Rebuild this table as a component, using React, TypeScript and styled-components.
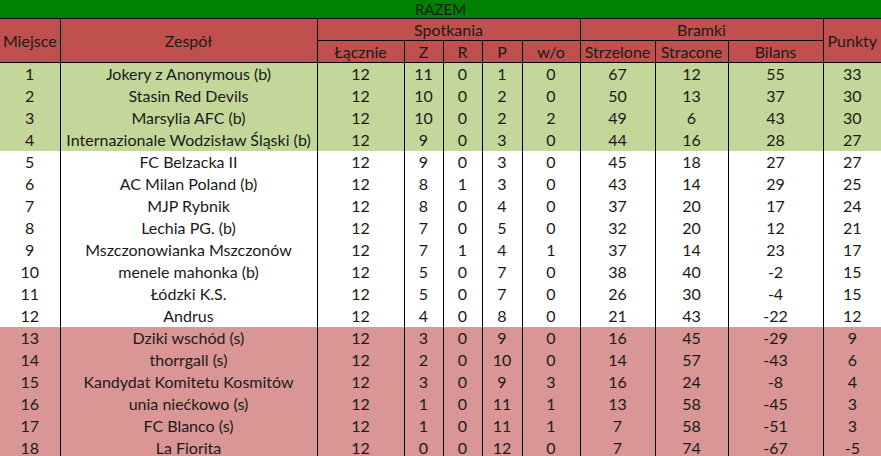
import styled, { createGlobalStyle } from 'styled-components';

type TZone = 'promo' | 'mid' | 'drop';

interface Team {
  name: string;
  played: number;
  w: number;
  d: number;
  l: number;
  wo: number;
  gf: number;
  ga: number;
  pts: number;
}

const teams: Team[] = [
  { name: 'Jokery z Anonymous (b)', played: 12, w: 11, d: 0, l: 1, wo: 0, gf: 67, ga: 12, pts: 33 },
  { name: 'Stasin Red Devils', played: 12, w: 10, d: 0, l: 2, wo: 0, gf: 50, ga: 13, pts: 30 },
  { name: 'Marsylia AFC (b)', played: 12, w: 10, d: 0, l: 2, wo: 2, gf: 49, ga: 6, pts: 30 },
  { name: 'Internazionale Wodzisław Śląski (b)', played: 12, w: 9, d: 0, l: 3, wo: 0, gf: 44, ga: 16, pts: 27 },
  { name: 'FC Belzacka II', played: 12, w: 9, d: 0, l: 3, wo: 0, gf: 45, ga: 18, pts: 27 },
  { name: 'AC Milan Poland (b)', played: 12, w: 8, d: 1, l: 3, wo: 0, gf: 43, ga: 14, pts: 25 },
  { name: 'MJP Rybnik', played: 12, w: 8, d: 0, l: 4, wo: 0, gf: 37, ga: 20, pts: 24 },
  { name: 'Lechia PG. (b)', played: 12, w: 7, d: 0, l: 5, wo: 0, gf: 32, ga: 20, pts: 21 },
  { name: 'Mszczonowianka Mszczonów', played: 12, w: 7, d: 1, l: 4, wo: 1, gf: 37, ga: 14, pts: 17 },
  { name: 'menele mahonka (b)', played: 12, w: 5, d: 0, l: 7, wo: 0, gf: 38, ga: 40, pts: 15 },
  { name: 'Łódzki K.S.', played: 12, w: 5, d: 0, l: 7, wo: 0, gf: 26, ga: 30, pts: 15 },
  { name: 'Andrus', played: 12, w: 4, d: 0, l: 8, wo: 0, gf: 21, ga: 43, pts: 12 },
  { name: 'Dziki wschód (s)', played: 12, w: 3, d: 0, l: 9, wo: 0, gf: 16, ga: 45, pts: 9 },
  { name: 'thorrgall (s)', played: 12, w: 2, d: 0, l: 10, wo: 0, gf: 14, ga: 57, pts: 6 },
  { name: 'Kandydat Komitetu Kosmitów', played: 12, w: 3, d: 0, l: 9, wo: 3, gf: 16, ga: 24, pts: 4 },
  { name: 'unia niećkowo (s)', played: 12, w: 1, d: 0, l: 11, wo: 1, gf: 13, ga: 58, pts: 3 },
  { name: 'FC Blanco (s)', played: 12, w: 1, d: 0, l: 11, wo: 1, gf: 7, ga: 58, pts: 3 },
  { name: 'La Fiorita', played: 12, w: 0, d: 0, l: 12, wo: 0, gf: 7, ga: 74, pts: -5 },
];

const colWidths = [60, 257, 87, 39, 39, 40, 58, 75, 73, 95, 58];

const zoneOf = (place: number): TZone => (place <= 4 ? 'promo' : place <= 12 ? 'mid' : 'drop');

const zoneColors: Record<TZone, string> = {
  promo: '#c4d79b',
  mid: '#ffffff',
  drop: '#da9694',
};

function App() {
  return (
    <>
      <GlobalStyle />
      <Table>
        <colgroup>
          {colWidths.map((w, i) => (
            <col key={i} style={{ width: w }} />
          ))}
        </colgroup>
        <thead>
          <tr>
            <TitleCell colSpan={11}>RAZEM</TitleCell>
          </tr>
          <tr>
            <HeadCell rowSpan={2}>Miejsce</HeadCell>
            <HeadCell rowSpan={2}>Zespół</HeadCell>
            <HeadCell colSpan={5}>Spotkania</HeadCell>
            <HeadCell colSpan={3}>Bramki</HeadCell>
            <HeadCell rowSpan={2}>Punkty</HeadCell>
          </tr>
          <tr>
            <HeadCell>Łącznie</HeadCell>
            <HeadCell>Z</HeadCell>
            <HeadCell>R</HeadCell>
            <HeadCell>P</HeadCell>
            <HeadCell>w/o</HeadCell>
            <HeadCell>Strzelone</HeadCell>
            <HeadCell>Stracone</HeadCell>
            <HeadCell>Bilans</HeadCell>
          </tr>
        </thead>
        <tbody>
          {teams.map((t, i) => (
            <Row key={t.name} $zone={zoneOf(i + 1)}>
              <Cell>{i + 1}</Cell>
              <Cell>{t.name}</Cell>
              <Cell>{t.played}</Cell>
              <Cell>{t.w}</Cell>
              <Cell>{t.d}</Cell>
              <Cell>{t.l}</Cell>
              <Cell>{t.wo}</Cell>
              <Cell>{t.gf}</Cell>
              <Cell>{t.ga}</Cell>
              <Cell>{t.gf - t.ga}</Cell>
              <Cell>{t.pts}</Cell>
            </Row>
          ))}
        </tbody>
      </Table>
    </>
  );
}

export default App;

const GlobalStyle = createGlobalStyle`
  html, body {
    margin: 0;
    padding: 0;
    background: #ffffff;
    overflow: hidden;
  }
`;

const Table = styled.table`
  width: 881px;
  table-layout: fixed;
  border-collapse: collapse;
  font-family: Lato, 'Noto Sans', sans-serif;
  font-size: 16px;
  color: #1a1a1a;
`;

const TitleCell = styled.th`
  height: 18px;
  padding: 0;
  background: #008000;
  border-bottom: 1px solid #000;
  font-weight: 400;
  font-size: 15px;
  line-height: 17px;
  color: #1a1a1a;
  text-align: center;
`;

const HeadCell = styled.th`
  height: 21px;
  padding: 0;
  background: #c0504d;
  border: 1px solid #000;
  font-weight: 400;
  line-height: 21px;
  text-align: center;
  white-space: nowrap;
  overflow: hidden;

  &:first-child {
    border-left: none;
  }
  &:last-child {
    border-right: none;
  }
`;

const Row = styled.tr<{ $zone: TZone }>`
  background: ${({ $zone }) => zoneColors[$zone]};
`;

const Cell = styled.td`
  height: 22px;
  padding: 0;
  border-left: 1px solid #000;
  border-right: 1px solid #000;
  text-align: center;
  line-height: 22px;
  white-space: nowrap;
  overflow: hidden;

  &:first-child {
    border-left: none;
  }
  &:last-child {
    border-right: none;
  }
`;
